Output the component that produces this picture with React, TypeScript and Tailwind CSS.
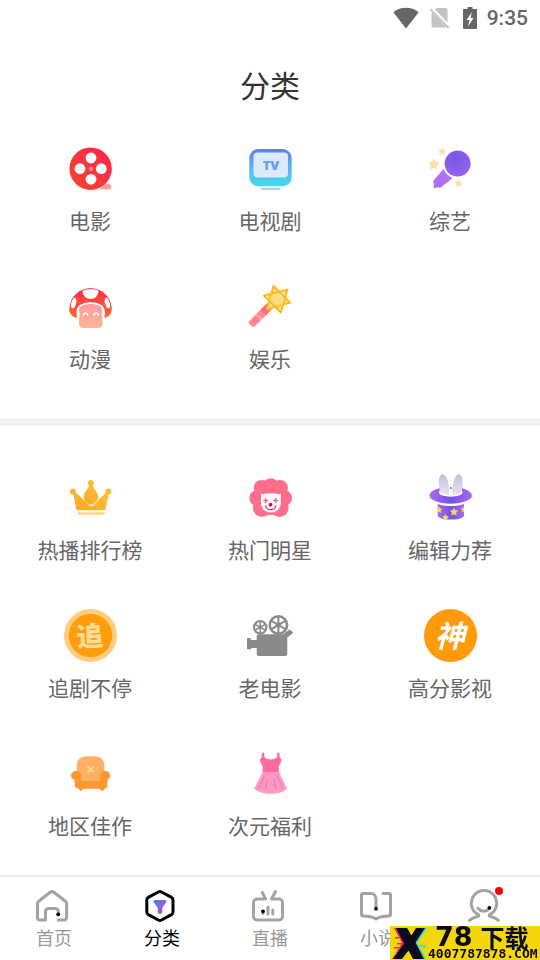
import type { ReactNode } from 'react';
import clsx from 'clsx';

type Item = { label: string; icon: ReactNode };

const STAR =
  'M0-10 2.9-3.6 9.6-3 4.6 1.6 6 8.2 0 4.8-6 8.2-4.6 1.6-9.6-3-2.9-3.6Z';

function Star({ x, y, r, fill }: { x: number; y: number; r: number; fill: string }) {
  return (
    <path
      d={STAR}
      fill={fill}
      stroke={fill}
      strokeWidth={2}
      strokeLinejoin="round"
      transform={`translate(${x} ${y}) scale(${r / 10})`}
    />
  );
}

function Icon({ children }: { children: ReactNode }) {
  return (
    <svg viewBox="0 0 54 54" className="size-[54px]" aria-hidden="true">
      {children}
    </svg>
  );
}

function FilmIcon() {
  return (
    <Icon>
      <defs>
        <linearGradient id="film" x1="1" y1="0" x2="0" y2="1">
          <stop offset="0" stopColor="#fb2552" />
          <stop offset="1" stopColor="#f8452b" />
        </linearGradient>
      </defs>
      <path d="M36 47.200c4-1.600 5-5.400 9-5.400 2 0 3.400 1.400 3.400 3.200 0 1.600-1 2.200-2.400 2.200Z" fill="#ff9c9c" />
      <circle cx="27.600" cy="26.700" r="21.200" fill="url(#film)" />
      <g fill="#fff">
        <circle cx="28" cy="16" r="5.400" />
        <circle cx="17" cy="26.700" r="5.400" />
        <circle cx="38.300" cy="26.700" r="5.400" />
        <circle cx="28" cy="37.300" r="5.400" />
      </g>
      <circle cx="28" cy="26.800" r="2" fill="#ff9a9a" />
    </Icon>
  );
}

function TvIcon() {
  return (
    <Icon>
      <defs>
        <linearGradient id="tv" x1="0" y1="0" x2="0" y2="1">
          <stop offset="0" stopColor="#5f7fe0" />
          <stop offset="0.5" stopColor="#5cb4f0" />
          <stop offset="1" stopColor="#41dcea" />
        </linearGradient>
      </defs>
      <rect x="6.300" y="7" width="42.400" height="37.200" rx="9" fill="url(#tv)" />
      <rect x="10.500" y="10.500" width="34.500" height="25" rx="4" fill="#dceafe" />
      <rect x="17.700" y="45.700" width="19.700" height="2.400" rx="1" fill="#a6d3fc" />
      <text
        x="28"
        y="27.500"
        textAnchor="middle"
        fontSize="13"
        fontWeight="800"
        fontFamily="'Open Sans', sans-serif"
        fill="#6b9ffb"
      >
        TV
      </text>
    </Icon>
  );
}

function MicIcon() {
  return (
    <Icon>
      <defs>
        <radialGradient id="mic" cx="0.4" cy="0.3" r="0.8">
          <stop offset="0" stopColor="#7458e4" />
          <stop offset="1" stopColor="#9a62f2" />
        </radialGradient>
      </defs>
      <path d="M20.500 27 29.300 36.300 18 45.200Q17 46.200 15.800 45.600L14.500 45.200 12 46.200Q10.400 46 10.600 44.200L11 42.500 10.200 40.200Q10.200 38.800 11.400 37.600Z" fill="#b26ef4" />
      <circle cx="34.600" cy="21.600" r="15" fill="#fff" />
      <circle cx="34.600" cy="21.600" r="13" fill="url(#mic)" />
      <Star x={19.3} y={9.9} r={3.6} fill="#fde0a0" />
      <Star x={11} y={22.4} r={5.2} fill="#fde0a0" />
      <Star x={35.6} y={41.2} r={3.6} fill="#fde0a0" />
    </Icon>
  );
}

function MushroomIcon() {
  return (
    <Icon>
      <defs>
        <linearGradient id="cap" x1="0" y1="0" x2="0" y2="1">
          <stop offset="0" stopColor="#fd2b49" />
          <stop offset="1" stopColor="#fb6a30" />
        </linearGradient>
        <linearGradient id="stem" x1="0" y1="0" x2="0" y2="1">
          <stop offset="0" stopColor="#ff9ba5" />
          <stop offset="1" stopColor="#ffb695" />
        </linearGradient>
        <clipPath id="capClip">
          <path d="M7.400 29C7.400 17.500 16 9.300 27.500 9.300S47.600 17.500 47.600 29c0 4-2 6-6 8H13.400c-4-2-6-4-6-8Z" />
        </clipPath>
      </defs>
      <path d="M6.300 29.500C6.300 17.500 15.500 8.200 27.500 8.200S48.700 17.500 48.700 29.500c0 3.700-2 6.200-6.300 8.300H12.600c-4.300-2.100-6.300-4.600-6.300-8.300Z" fill="url(#cap)" />
      <g fill="#fff" clipPath="url(#capClip)">
        <ellipse cx="27.500" cy="11" rx="8" ry="8" />
        <ellipse cx="10.600" cy="23" rx="2.500" ry="5.500" transform="rotate(14 10.600 23)" />
        <ellipse cx="44.400" cy="23" rx="2.500" ry="5.500" transform="rotate(-14 44.400 23)" />
      </g>
      <path d="M14.300 38.500c-.4-2-.8-4-.8-6.500 0-6.500 6-9.800 14.200-9.800S41.900 25.500 41.900 32c0 2.500-.4 4.500-.8 6.500Z" fill="#fff" />
      <path d="M16 30.500c0-4.500 5-6.600 11.700-6.600s11.700 2.100 11.700 6.600L38.600 35l.8 4v5c0 2.800-1.600 4-4.200 4H20.200c-2.600 0-4.200-1.200-4.200-4v-5l.8-4Z" fill="url(#stem)" />
      <path d="M20.300 35.300a2.200 2.200 0 0 1 4.400 0M31 35.300a2.200 2.200 0 0 1 4.400 0" fill="none" stroke="#fff" strokeWidth="1.300" strokeLinecap="round" />
    </Icon>
  );
}

function WandIcon() {
  return (
    <Icon>
      <g transform="rotate(-45 9 43.500)">
        <rect x="7" y="39.800" width="26" height="7.600" rx="2" fill="#ff8793" />
        <rect x="25" y="39.800" width="8" height="7.600" fill="#ff6d74" />
        <rect x="17.500" y="39.800" width="2.500" height="7.600" fill="#ffa9b0" />
      </g>
      <g fill="#fbdc84" stroke="#fbba1c" strokeWidth="1.800" strokeLinejoin="round">
        <path d="M30.500 6 47.200 22.700 23.700 29.300Z" />
        <path d="M44.600 9.400 37.800 32.500 20.800 15.700Z" />
      </g>
      <path d="M30.500 6 47.200 22.700 23.700 29.300Z" fill="none" stroke="#fbba1c" strokeWidth="1.400" strokeLinejoin="round" />
    </Icon>
  );
}

function CrownIcon() {
  return (
    <Icon>
      <defs>
        <linearGradient id="crown" x1="1" y1="0" x2="0" y2="1">
          <stop offset="0" stopColor="#fdc53f" />
          <stop offset="1" stopColor="#fea41f" />
        </linearGradient>
      </defs>
      <g fill="url(#crown)">
        <circle cx="10" cy="20.500" r="2.900" />
        <circle cx="45.400" cy="20.500" r="2.900" />
        <path d="M9.800 20.500 11.200 20 27 34.800Q28.300 35.700 29.600 34.800L44.300 20 46 20.500 42.600 37.800Q42.300 39.300 40.800 39.300H15Q13.500 39.300 13.200 37.800Z" />
        <circle cx="28" cy="11.900" r="2.900" />
        <path d="M27 11h2c.2 6.500 6.300 9.500 6.300 15 0 3-3.800 7.400-7.300 7.400s-7.300-4.400-7.300-7.400c0-5.500 6.100-8.500 6.300-15Z" />
      </g>
      <rect x="14.700" y="41.400" width="27.500" height="2" rx="1" fill="#ffca70" />
    </Icon>
  );
}

function ClownIcon() {
  return (
    <Icon>
      <g fill="#ff6d8d">
        <circle cx="27.700" cy="28" r="16" />
        <circle cx="27.900" cy="15" r="7.700" />
        <circle cx="18.600" cy="16.800" r="7.900" />
        <circle cx="37" cy="16.800" r="7.900" />
        <circle cx="14" cy="27" r="7.700" />
        <circle cx="41.300" cy="27" r="7.700" />
        <circle cx="19" cy="36.700" r="9.200" />
        <circle cx="36.500" cy="36.700" r="9.200" />
      </g>
      <path d="M18 22.600c1.400.7 3 .7 4.600 0h10.600c1.600.7 3.200.7 4.600 0V32c0 5.400-4.200 9.600-9.900 9.600S18 37.400 18 32Z" fill="#fff" />
      <path d="M20.200 29.400h5M22.700 26.900v5M30.200 29.400h5M32.700 26.900v5" stroke="#f7647f" strokeWidth="1.500" />
      <path d="M22.800 34.600c.6 5.600 9.400 5.600 10 0" fill="none" stroke="#e0489a" strokeWidth="1.400" strokeLinecap="round" />
      <circle cx="27.500" cy="33.700" r="1.900" fill="#c5104f" />
    </Icon>
  );
}

function HatIcon() {
  return (
    <Icon>
      <defs>
        <linearGradient id="brim" x1="0" y1="0" x2="1" y2="0">
          <stop offset="0" stopColor="#a86bee" />
          <stop offset="0.5" stopColor="#7553e4" />
          <stop offset="1" stopColor="#a86bee" />
        </linearGradient>
        <linearGradient id="ear" x1="0" y1="0" x2="0" y2="1">
          <stop offset="0" stopColor="#c5bde0" />
          <stop offset="1" stopColor="#e8e4ee" />
        </linearGradient>
        <clipPath id="hatBody">
          <path d="M14.700 33c4 1.500 8 2 13 2s9.300-.5 13.300-2v12c-2 2.600-7 3.600-13.200 3.600S16.700 47.600 14.700 45Z" />
        </clipPath>
      </defs>
      <g clipPath="url(#hatBody)">
        <rect x="14" y="32" width="28" height="18" fill="url(#brim)" />
        <Star x={31} y={41} r={3.8} fill="#fddc4c" />
        <Star x={16} y={39} r={3} fill="#fddc4c" />
        <Star x={22.5} y={46.5} r={3} fill="#fddc4c" />
        <Star x={41} y={38.5} r={3} fill="#fddc4c" />
      </g>
      <ellipse cx="27.700" cy="24.400" rx="21.200" ry="8.300" fill="url(#brim)" />
      <path d="M16 21.500c0 5.500 23.500 5.500 23.500 0l-2-7H18Z" fill="#fff" />
      <circle cx="27.800" cy="17" r="1" fill="#7553e4" />
      <path d="M17.400 21C14.500 13 15.500 3.200 19.500 3.200S27 13 26 23.600c-3.500.5-6.500-.4-8.600-2.600Z" fill="url(#ear)" />
      <path d="M38 21c2.900-8 1.900-17.800-2.100-17.800S28.400 13 29.400 23.600c3.500.5 6.500-.4 8.600-2.600Z" fill="url(#ear)" />
    </Icon>
  );
}

function CoinIcon() {
  return (
    <Icon>
      <circle cx="27.500" cy="26.500" r="26.500" fill="#ffcd80" />
      <circle cx="27.500" cy="26.500" r="21.700" fill="#ff9d0a" />
      <text
        x="27"
        y="37"
        textAnchor="middle"
        fontSize="27"
        fontWeight="900"
        fontFamily="'Noto Sans CJK SC', sans-serif"
        fill="#ffdc98"
        transform="rotate(-3 27 27)"
      >
        追
      </text>
    </Icon>
  );
}

function CameraIcon() {
  return (
    <Icon>
      <g fill="none" stroke="#8a8a8a">
        <circle cx="35.400" cy="16" r="8.700" strokeWidth="2.600" />
        <path d="M35.400 7.500v17M28 11.700l14.800 8.600M28 20.300l14.800-8.600" strokeWidth="2" />
        <circle cx="17.200" cy="18.300" r="6.200" strokeWidth="2.200" />
        <path d="M17.200 12.500v11.600M12.200 15.400l10 5.800M12.200 21.200l10-5.800" strokeWidth="1.500" />
      </g>
      <g fill="#8a8a8a">
        <circle cx="35.400" cy="16" r="2.800" />
        <circle cx="17.200" cy="18.300" r="2" />
        <path d="M15.500 25.300H40L46.500 20.500 45.700 19.400 47.600 21.200 50 23.200 49 25 44.300 28.300V45.300Q44.300 47 42.500 47H15.500Q13.700 47 13.700 45.300V39H8.200V40.200H4V29H7.800V31H13.700V27Q13.700 25.300 15.500 25.300Z" />
      </g>
    </Icon>
  );
}

function GodIcon() {
  return (
    <Icon>
      <circle cx="27.500" cy="26.500" r="26.500" fill="#ff9a0b" />
      <text
        x="27"
        y="38"
        textAnchor="middle"
        fontSize="30"
        fontWeight="700"
        fontStyle="italic"
        fontFamily="'Noto Sans CJK SC', sans-serif"
        fill="#fff"
      >
        神
      </text>
    </Icon>
  );
}

function SofaIcon() {
  return (
    <Icon>
      <rect x="13.700" y="9.200" width="27.700" height="28" rx="9" fill="#ffb063" />
      <path d="M13.200 24c3.200 0 5.300 2.300 5.300 5.300V34h18.200v-4.700c0-3 2.200-5.300 5.300-5.300 3 0 5.200 1.900 5.200 4.700 0 2-1.100 3.400-2.800 4.300v5.500c0 1.800-1.400 3-3 3.200-.4 1.500-1.300 2.100-2.300 2.100s-2-.7-2.300-2H20.400c-.4 1.300-1.300 2-2.300 2s-2-.6-2.400-2.100c-2-.2-4-1.400-4-3.200V33C9.500 32.100 8 30.700 8 28.700 8 25.900 10.200 24 13.200 24Z" fill="#ff9831" />
      <path d="m25.200 20 5 4.600M30.200 20l-5 4.600" stroke="#ffdf8c" strokeWidth="1.900" strokeLinecap="round" />
    </Icon>
  );
}

function DressIcon() {
  return (
    <Icon>
      <path d="M19.700 24.500h16.100C38 30.500 41.500 35.500 44 41.500 38 48.600 17.500 48.600 11.300 41.500 13.800 35.500 17.500 30.500 19.700 24.500Z" fill="#ff9ac7" />
      <path d="M18.800 6.400a1.300 1.300 0 0 1 2.500 0V10c2.500 3.200 10.300 3.200 12.800 0V6.400a1.300 1.300 0 0 1 2.500 0V10l2.100 2.600c0 3-2.900 4.900-2.900 7.900v4.600H19.700v-4.600c0-3-2.900-4.900-2.900-7.900l2-2.600Z" fill="#ff6b9d" />
      <path d="M21.500 28.500 16.300 40.500M34 28.500 39.500 40.500M24.300 33 22.500 41.500M31 33 33 41.500" stroke="#fc79ad" strokeWidth="1.400" strokeLinecap="round" />
    </Icon>
  );
}

function NavIcon({ children, className }: { children: ReactNode; className?: string }) {
  return (
    <svg
      viewBox="0 0 36 36"
      className={clsx('size-9', className)}
      fill="none"
      stroke="currentColor"
      strokeWidth={3}
      strokeLinecap="round"
      strokeLinejoin="round"
      aria-hidden="true"
    >
      {children}
    </svg>
  );
}

function HomeIcon() {
  return (
    <NavIcon className="text-[#a3a3a3]">
      <path d="M9.500 32.100H4a2.500 2.500 0 0 1-2.500-2.500V15.700a3 3 0 0 1 1.200-2.400L14.200 4.200a3 3 0 0 1 3.700 0l11.500 9.100a3 3 0 0 1 1.200 2.400v13.900a2.500 2.500 0 0 1-2.500 2.500h-6M9.500 32.100v-8.600a3 3 0 0 1 3-3h7a3 3 0 0 1 2.800 3v1" />
      <circle cx="22.200" cy="26.300" r="1.900" fill="#000" stroke="none" />
    </NavIcon>
  );
}

function CategoryIcon() {
  return (
    <NavIcon className="text-black">
      <defs>
        <linearGradient id="funnel" x1="0" y1="0" x2="1" y2="1">
          <stop offset="0" stopColor="#2d8fe6" />
          <stop offset="0.5" stopColor="#8a63dc" />
          <stop offset="1" stopColor="#e22bd0" />
        </linearGradient>
      </defs>
      <path d="M14.300 4a3.200 3.200 0 0 1 3.200 0l10 5.400a3 3 0 0 1 1.500 2.600v12a3 3 0 0 1-1.500 2.600l-10 5.400a3.200 3.200 0 0 1-3.200 0l-10-5.400A3 3 0 0 1 2.800 24V12a3 3 0 0 1 1.500-2.600Z" />
      <path d="M11.200 12h9.600c1.600 0 2 1.400 1.200 2.600L18.200 20v4.400c0 .9-.8 1.400-2.200 1.400s-2.200-.5-2.200-1.400V20L10 14.600C9.200 13.400 9.600 12 11.200 12Z" fill="url(#funnel)" stroke="none" />
    </NavIcon>
  );
}

function LiveIcon() {
  return (
    <NavIcon className="text-[#a3a3a3]">
      <path d="M10.300 4.500 13.700 11H5a3.500 3.500 0 0 0-3.500 3.500v14A3.500 3.500 0 0 0 5 32h22a3.500 3.500 0 0 0 3.500-3.500v-14A3.500 3.500 0 0 0 27 11h-7.500l4-7.500" />
      <path d="M11 25.500v-1M16 19v7M20.800 22v4" />
      <circle cx="11" cy="23.300" r="1.900" fill="#000" stroke="none" />
    </NavIcon>
  );
}

function NovelIcon() {
  return (
    <NavIcon className="text-[#a3a3a3]">
      <path d="M16 18v-7c0-3-2-5.500-5-5.500H3A1.500 1.500 0 0 0 1.500 7v19.500c0 1 .5 1.500 1.500 1.500 5 0 9 .5 13 3 4-2.500 8-3 13-3 1 0 1.500-.5 1.500-1.500V7A1.500 1.500 0 0 0 29 5.500h-6" />
      <circle cx="16" cy="20.700" r="1.900" fill="#000" stroke="none" />
    </NavIcon>
  );
}

function UserIcon() {
  return (
    <NavIcon className="text-[#a3a3a3]">
      <path d="M1.500 32.300c2-1.800 4.500-2.900 8-3.800 1.700-.5 1.500-1.500.5-2.100a12.700 12.700 0 1 1 12 0c-1 .6-1.200 1.600.5 2.100 3.500.9 6 2 8 3.800M10 20.200c3 3.800 8 3.800 10.500 1" />
      <circle cx="21.400" cy="19.800" r="1.900" fill="#000" stroke="none" />
    </NavIcon>
  );
}

const genres: Item[] = [
  { label: '电影', icon: <FilmIcon /> },
  { label: '电视剧', icon: <TvIcon /> },
  { label: '综艺', icon: <MicIcon /> },
  { label: '动漫', icon: <MushroomIcon /> },
  { label: '娱乐', icon: <WandIcon /> },
];

const topics: Item[] = [
  { label: '热播排行榜', icon: <CrownIcon /> },
  { label: '热门明星', icon: <ClownIcon /> },
  { label: '编辑力荐', icon: <HatIcon /> },
  { label: '追剧不停', icon: <CoinIcon /> },
  { label: '老电影', icon: <CameraIcon /> },
  { label: '高分影视', icon: <GodIcon /> },
  { label: '地区佳作', icon: <SofaIcon /> },
  { label: '次元福利', icon: <DressIcon /> },
];

const tabs: Item[] = [
  { label: '首页', icon: <HomeIcon /> },
  { label: '分类', icon: <CategoryIcon /> },
  { label: '直播', icon: <LiveIcon /> },
  { label: '小说', icon: <NovelIcon /> },
];

function StatusBar() {
  return (
    <div className="flex h-9 items-center justify-end gap-2.5 pr-3 text-[#666]">
      <svg viewBox="0 0 26 22" className="h-[22px] w-[26px]" aria-hidden="true">
        <path d="M13 21.500.3 5.200C8 -.7 18 -.7 25.700 5.200Z" fill="currentColor" />
      </svg>
      <svg viewBox="0 0 24 22" className="h-[22px] w-6" aria-hidden="true">
        <path d="M7.500 1H17q1.500 0 1.500 1.500V19q0 1.500-1.500 1.500H4q-1.500 0-1.500-1.500V6Z" fill="#c4c4c4" />
        <path d="M2 1.200 21 21.200" stroke="#fff" strokeWidth="4" />
        <path d="M1.200 2.200 19.700 21" stroke="#c4c4c4" strokeWidth="1.800" />
      </svg>
      <svg viewBox="0 0 14 22" className="h-[22px] w-3.5" aria-hidden="true">
        <path d="M4.500 0h5v2H13q1 0 1 1v18q0 1-1 1H1q-1 0-1-1V3q0-1 1-1h3.500Z" fill="currentColor" />
        <path d="M9 5 3.500 13h3L5 19.500 10.500 11h-3Z" fill="#fff" />
      </svg>
      <span className="font-[Roboto,sans-serif] text-[21px] leading-6 font-medium">9:35</span>
    </div>
  );
}

function Grid({ items }: { items: Item[] }) {
  return (
    <div className="grid grid-cols-3">
      {items.map((item) => (
        <button
          key={item.label}
          type="button"
          className="flex flex-col items-center gap-2 pb-11 text-[21px] leading-8 text-[#666]"
        >
          {item.icon}
          <span>{item.label}</span>
        </button>
      ))}
    </div>
  );
}

function Watermark() {
  return (
    <div className="absolute right-0 bottom-0 flex h-[34px] w-[150px] bg-[#f3d60b] text-[#0b0b1c]">
      <svg viewBox="0 0 38 34" className="h-[34px] w-[38px] shrink-0" aria-hidden="true">
        <g fill="#f5236b">
          <path d="M4 2H14L22 14 11 33H2L12 17Z" />
          <path d="M5 11h4v1.500H5ZM7 17h5v1.500H7ZM4 21h5v1.500H4Z" />
        </g>
        <g fill="#23dfe6">
          <path d="M27 2H37L27 17 36 33H25L17 21Z" />
          <path d="M28 19h5v1.500h-5ZM33 20h2.500v2H33ZM5 27h7v1.500H5Z" />
        </g>
        <path d="M6 2H17L21.500 9.500 26 2H35L25.500 16.500 34 33H23L18.500 24.500 12 33H3L14 17.500Z" fill="#0b0b1c" />
      </svg>
      <div className="flex flex-col">
        <div className="flex h-[22px] items-center gap-2 pl-[7px]">
          <span className="font-['DejaVu_Sans',sans-serif] text-[27px] leading-[22px] font-bold">78</span>
          <span className="text-2xl leading-[22px] font-bold whitespace-nowrap">下载</span>
        </div>
        <span className="font-['DejaVu_Sans_Mono',monospace] text-[13px] leading-3 font-bold">
          4007787878.COM
        </span>
      </div>
    </div>
  );
}

export default function App() {
  return (
    <div className="flex min-h-screen flex-col bg-white font-['Noto_Sans_CJK_SC',sans-serif]">
      <StatusBar />
      <main className="flex-1">
        <h1 className="mb-2.5 flex h-24 items-center justify-center text-[30px] text-[#333]">
          分类
        </h1>
        <Grid items={genres} />
        <div className="h-2 bg-[#f2f2f2]" />
        <div className="-mb-11 pt-[45px]">
          <Grid items={topics} />
        </div>
      </main>

      <nav className="sticky bottom-0 grid grid-cols-5 border-t-2 border-[#ebebeb] bg-white pt-[11px] pb-2.5">
        {tabs.map((tab) => (
          <a
            key={tab.label}
            href="#"
            aria-current={tab.label === '分类' ? 'page' : undefined}
            className={clsx(
              'flex flex-col items-center text-lg leading-[26px]',
              tab.label === '分类' ? 'text-black' : 'text-[#999]',
            )}
          >
            {tab.icon}
            <span>{tab.label}</span>
          </a>
        ))}
        <a href="#" aria-label="我的" className="flex flex-col items-center">
          <span className="relative">
            <UserIcon />
            <span className="absolute -top-px right-px size-2 rounded-full bg-[#f00]" />
          </span>
        </a>
        <Watermark />
      </nav>
    </div>
  );
}
